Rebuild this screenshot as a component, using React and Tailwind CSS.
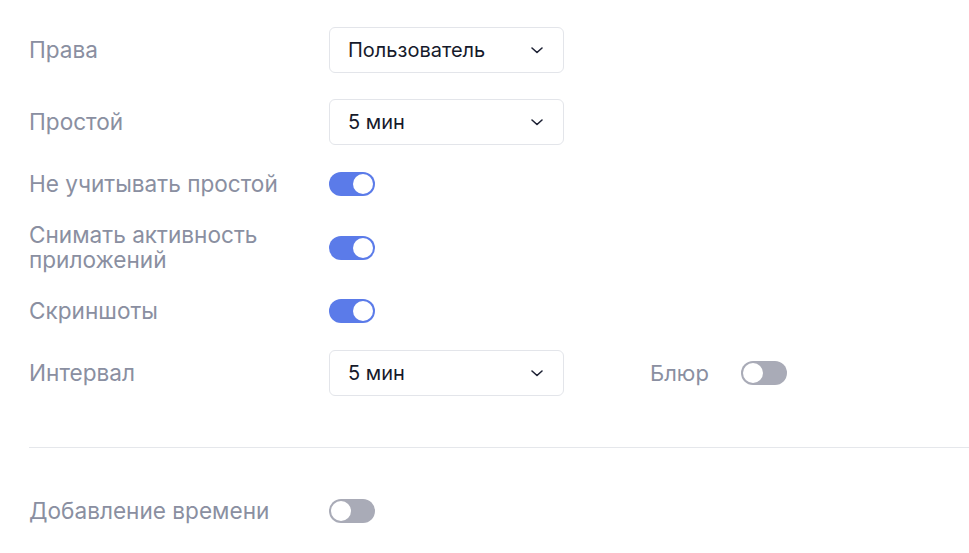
import React from 'react';

const Chevron = () => (
  <svg width="16" height="16" viewBox="0 0 16 16" fill="none" className="text-[#1e2235]">
    <path d="M3 6l5 4.5L13 6" stroke="currentColor" strokeWidth="1.6" strokeLinecap="round" strokeLinejoin="round" />
  </svg>
);

const Select = ({ value }) => (
  <div className="w-[235px] h-[46px] border border-[#e3e5ea] rounded-md bg-white flex items-center justify-between pl-[18px] pr-[18px]">
    <span className="text-[20px] text-[#161a2b]">{value}</span>
    <Chevron />
  </div>
);

const Toggle = ({ on }) => (
  <div className={`w-[46px] h-6 rounded-full flex items-center px-[2px] ${on ? 'bg-[#5b7be9] justify-end' : 'bg-[#a9abb7] justify-start'}`}>
    <div className="w-5 h-5 rounded-full bg-white" />
  </div>
);

const Row = ({ label, children, tight }) => (
  <div className="flex items-center">
    <div className={`w-[300px] text-[22.6px] text-[#8a8fa1] ${tight ? 'leading-[24.5px]' : 'leading-[26px]'}`}>{label}</div>
    {children}
  </div>
);

export default function App() {
  return (
    <div className="min-h-[553px] bg-white pt-[27px] pl-[29px] font-['Inter',sans-serif]">
      <div className="flex flex-col gap-[26px]">
        <Row label="Права"><Select value="Пользователь" /></Row>
        <Row label="Простой"><Select value="5 мин" /></Row>
        <Row label="Не учитывать простой"><Toggle on /></Row>
        <Row tight label={<>Снимать активность<br />приложений</>}><Toggle on /></Row>
        <Row label="Скриншоты"><Toggle on /></Row>
        <Row label="Интервал">
          <Select value="5 мин" />
          <div className="ml-[86px] flex items-center gap-8">
            <span className="text-[22px] text-[#8a8fa1]">Блюр</span>
            <Toggle />
          </div>
        </Row>
      </div>
      <div className="border-t border-[#e5e7eb] mt-[51px] mb-[50px]" />
      <Row label="Добавление времени"><Toggle /></Row>
    </div>
  );
}
